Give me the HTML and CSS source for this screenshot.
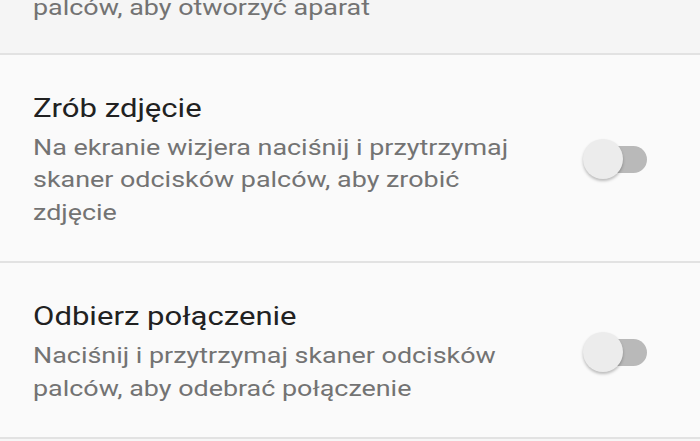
FILE: index.html
```html
<!DOCTYPE html>
<html lang="pl">
<head>
	<meta charset="UTF-8">
	<title>Skaner odcisków palców</title>
	<link rel="stylesheet" href="styles.css">
</head>
<body>
	<ul class="prefs">
		<li class="item item-top">
			<div class="text">
				<p class="summary">palców, aby otworzyć aparat</p>
			</div>
		</li>
		<li class="item">
			<div class="text">
				<h3 class="title">Zrób zdjęcie</h3>
				<p class="summary">Na ekranie wizjera naciśnij i przytrzymaj skaner odcisków palców, aby zrobić zdjęcie</p>
			</div>
			<span class="switch"><i class="thumb"></i></span>
		</li>
		<li class="item">
			<div class="text">
				<h3 class="title">Odbierz połączenie</h3>
				<p class="summary">Naciśnij i przytrzymaj skaner odcisków palców, aby odebrać połączenie</p>
			</div>
			<span class="switch"><i class="thumb"></i></span>
		</li>
	</ul>
</body>
</html>
```
FILE: styles.css
```css
body{
	margin: 0;
	background: #f6f6f6;
	font-family: Roboto, "Noto Sans", sans-serif;
}

.prefs{
	margin: 0;
	padding: 0;
	list-style: none;
}

.item{
	display: flex;
	align-items: center;
	padding: 36px 53px 33px 33px;
	background: #fafafa;
	border-bottom: 2px solid #e2e2e2;
}

.item-top{
	margin-top: -9px;
	padding-top: 0;
	padding-bottom: 29px;
	background: #f5f5f5;
}

/* tekst ekranu jest szerszy niż Roboto, więc rozciągamy go w poziomie */
.text{
	width: 415px;
	flex: none;
	transform: scaleX(1.195);
	transform-origin: left center;
}

.title{
	margin: 0;
	font-size: 26px;
	font-weight: normal;
	line-height: 34px;
	color: #212121;
}

.summary{
	margin: 6px 0 0;
	font-size: 22.5px;
	line-height: 32.5px;
	color: #737373;
}

.item-top .summary{
	margin: 0;
}

/* przełącznik wyłączony */
.switch{
	position: relative;
	display: block;
	width: 64px;
	height: 40px;
	margin-left: auto;
}

.switch::before{
	content: "";
	position: absolute;
	right: 0;
	top: 7px;
	width: 57px;
	height: 27px;
	border-radius: 14px;
	background: #b9b9b9;
}

.thumb{
	position: absolute;
	left: 0;
	top: 0;
	width: 40px;
	height: 40px;
	border-radius: 50%;
	background: #ececec;
	box-shadow: 0 2px 3px rgba(0,0,0,.25);
}
```
